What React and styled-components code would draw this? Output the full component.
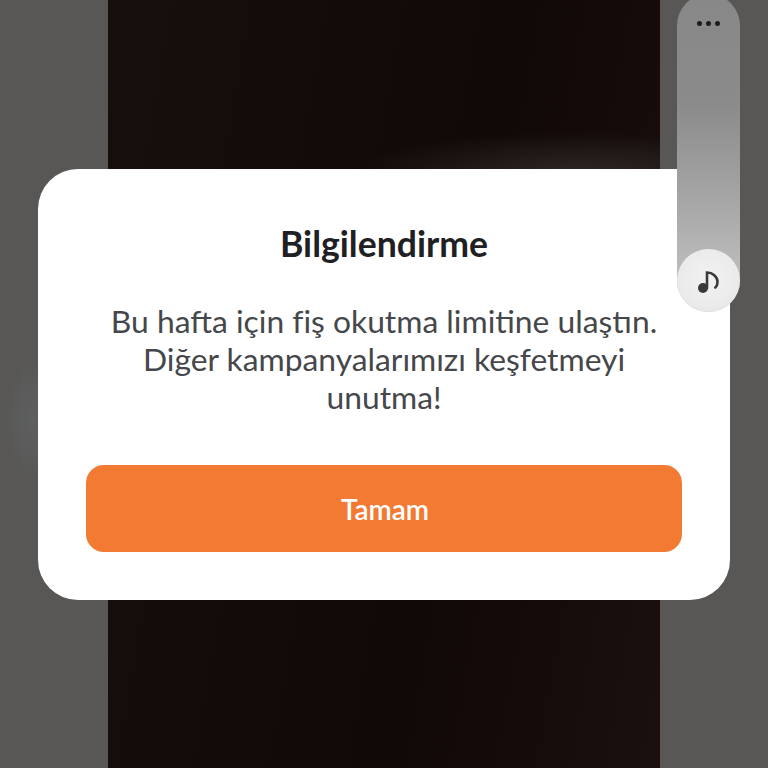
import React from "react";
import styled, { createGlobalStyle } from "styled-components";

const GlobalStyle = createGlobalStyle`
  html, body {
    margin: 0;
    padding: 0;
    background: #5a5958;
  }
  * {
    box-sizing: border-box;
  }
`;

const Screen = styled.div`
  position: relative;
  width: 768px;
  height: 768px;
  overflow: hidden;
  display: flex;
  justify-content: center;
  background:
    radial-gradient(ellipse 30px 60px at 34px 420px, #5d605f 0%, #5d605f00 100%),
    #585756;
  font-family: Lato, "Noto Sans", sans-serif;
`;

const VideoBackdrop = styled.div`
  width: 552px;
  height: 100%;
  background:
    radial-gradient(ellipse 220px 40px at 85% 172px, #2c2623 0%, #2c262300 100%),
    linear-gradient(100deg, #170f0c 0%, #110907 60%, #1a100d 100%);
`;

const Overlay = styled.div`
  position: absolute;
  inset: 0;
  display: flex;
  align-items: center;
  justify-content: center;
`;

const Dialog = styled.div`
  width: 692px;
  height: 431px;
  padding: 55px 48px 48px;
  display: flex;
  flex-direction: column;
  align-items: center;
  background: #ffffff;
  border-radius: 40px;
`;

const Title = styled.h1`
  margin: 0;
  font-size: 35.6px;
  line-height: 40px;
  font-weight: 700;
  color: #1f2023;
`;

const Message = styled.p`
  margin: 38px 0 0;
  width: 100%;
  font-size: 31.8px;
  line-height: 38px;
  font-weight: 400;
  text-align: center;
  color: #45474b;
`;

const ConfirmButton = styled.button`
  margin-top: auto;
  width: 100%;
  height: 87px;
  padding: 2px 0 0 2px;
  border: 0;
  border-radius: 18px;
  background: #f37a33;
  color: #ffffff;
  font-family: inherit;
  font-size: 28px;
  font-weight: 600;
`;

const SidePill = styled.div`
  position: absolute;
  top: -6px;
  left: 677px;
  width: 63px;
  height: 318px;
  border-radius: 32px;
  display: flex;
  flex-direction: column;
  align-items: center;
  justify-content: space-between;
  background: linear-gradient(180deg, #888888 0%, #8b8b8b 35%, #a6a6a6 65%, #bababa 85%);
`;

const MoreDots = styled.div`
  margin-top: 27px;
  display: flex;
  gap: 4px;
`;

const Dot = styled.span`
  width: 5px;
  height: 5px;
  border-radius: 50%;
  background: #1d1d1f;
`;

const MusicButton = styled.div`
  width: 63px;
  height: 63px;
  border-radius: 50%;
  display: flex;
  align-items: center;
  justify-content: center;
  background: radial-gradient(circle at 50% 45%, #f2f2f2 0%, #ebebeb 60%, #e0e0e0 100%);
`;

const MusicNote = () => (
  <svg width="24" height="26" viewBox="0 0 24 26">
    <ellipse cx="6" cy="20" rx="5" ry="5" fill="#3a3a3c" />
    <path
      d="M10 20V4.500C15.500 4.500 20.500 8.500 20.500 14C20.500 16.500 19.500 18.500 18.300 19.500"
      fill="none"
      stroke="#3a3a3c"
      strokeWidth="2.600"
      strokeLinecap="round"
    />
  </svg>
);

export default function App() {
  return (
    <Screen lang="tr">
      <GlobalStyle />
      <VideoBackdrop />
      <Overlay>
        <Dialog>
          <Title>Bilgilendirme</Title>
          <Message>
            Bu hafta için fiş okutma limitine ulaştın.
            <br />
            Diğer kampanyalarımızı keşfetmeyi
            <br />
            unutma!
          </Message>
          <ConfirmButton>Tamam</ConfirmButton>
        </Dialog>
      </Overlay>
      <SidePill>
        <MoreDots>
          <Dot />
          <Dot />
          <Dot />
        </MoreDots>
        <MusicButton>
          <MusicNote />
        </MusicButton>
      </SidePill>
    </Screen>
  );
}
